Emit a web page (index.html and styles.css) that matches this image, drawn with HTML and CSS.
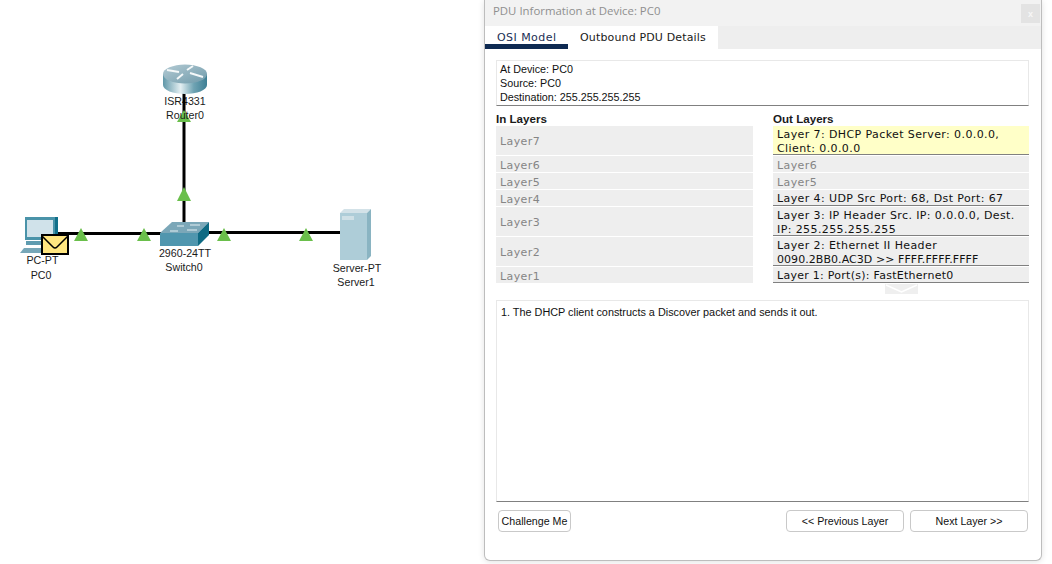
FILE: index.html
```html
<!DOCTYPE html>
<html lang="en">
<head>
    <meta charset="UTF-8">
    <meta name="viewport" content="width=device-width, initial-scale=1.0">
    <title>PDU Information at Device: PC0</title>
    <link rel="stylesheet" href="styles.css">
</head>
<body>
    <div class="workspace">
        <svg class="topology" width="484" height="564" viewBox="0 0 484 564">
            <defs>
                <linearGradient id="router-side" x1="0" x2="1" y1="0" y2="0">
                    <stop offset="0" stop-color="#5f97a8"/>
                    <stop offset="0.4" stop-color="#e4eff2"/>
                    <stop offset="0.7" stop-color="#6fa3b3"/>
                    <stop offset="1" stop-color="#3d7f94"/>
                </linearGradient>
                <linearGradient id="router-top" x1="0" x2="1" y1="0" y2="1">
                    <stop offset="0" stop-color="#b4cbd4"/>
                    <stop offset="1" stop-color="#6f9aaa"/>
                </linearGradient>
            </defs>

            <text class="node-label" x="185" y="105">ISR4331</text>

            <!-- links -->
            <path class="link" d="M184 90V232"/>
            <path class="link" d="M55 233.500H165"/>
            <path class="link" d="M205 232.500H342"/>

            <!-- router -->
            <path d="M163 74V85C163 90 173 94 185 94S207 90 207 85V74Z" fill="url(#router-side)"/>
            <ellipse cx="185" cy="74" rx="22" ry="9.500" fill="url(#router-top)"/>
            <path class="router-arrows" d="M167 70L179 72M190 73L203 77M193 66L187 70M183 74L177 79"/>

            <!-- switch -->
            <path d="M160 233L172 222H209L198 233Z" fill="#7ba7b8"/>
            <path d="M160 233H198V246H160Z" fill="#5096ae"/>
            <path d="M198 233L209 222V235L198 246Z" fill="#0e6a83"/>
            <path class="switch-arrows" d="M177 226H184M190 225H200M170 231H178M187 230H197"/>

            <!-- server -->
            <path d="M340 213L344 209H371L367 213Z" fill="#d3e2e8"/>
            <path d="M340 213H367V260H340Z" fill="#aecdd8"/>
            <path d="M367 213L371 209V256L367 260Z" fill="#8ab4c2"/>
            <path d="M342 216H354V220H342Z" fill="#cfe0e6"/>

            <!-- pc -->
            <path d="M25 217H55V240H25Z" fill="#4a93a9"/>
            <path d="M55 217H58V238L55 240Z" fill="#11708a"/>
            <path d="M27 220H53V237H27Z" fill="#d0e2ea"/>
            <path d="M26 241H50V245H26Z" fill="#5f9cb0"/>
            <path d="M24 248L20 253H44V248Z" fill="#77a7b8"/>

            <!-- packet -->
            <rect class="envelope" x="42" y="235" width="26" height="19"/>
            <path class="envelope-flap" d="M42 236L53 247Q55 249 57 247L68 236"/>

            <!-- link lights -->
            <g class="lights">
                <path d="M184 110L191 122H177Z"/>
                <path d="M184 187L191 201H177Z"/>
                <path d="M81 228L88 241H74Z"/>
                <path d="M144 228L151 241H137Z"/>
                <path d="M224 228L231 241H217Z"/>
                <path d="M306 228L313 241H299Z"/>
            </g>

            <text class="node-label" x="185" y="119">Router0</text>
            <text class="node-label" x="42.500" y="264">PC-PT</text>
            <text class="node-label" x="41" y="279">PC0</text>
            <text class="node-label" x="185" y="257">2960-24TT</text>
            <text class="node-label" x="184" y="271">Switch0</text>
            <text class="node-label" x="357" y="272">Server-PT</text>
            <text class="node-label" x="356" y="286">Server1</text>
        </svg>
    </div>

    <div class="panel">
        <div class="title-bar">
            <span class="title">PDU Information at Device: PC0</span>
            <button class="close-button">x</button>
        </div>
        <div class="tabs">
            <div class="tab active">OSI Model</div>
            <div class="tab">Outbound PDU Details</div>
        </div>
        <div class="panel-body">
            <div class="device-info">
                <div>At Device: PC0</div>
                <div>Source: PC0</div>
                <div>Destination: 255.255.255.255</div>
            </div>

            <div class="layers">
                <div class="layer-column">
                    <div class="column-title">In Layers</div>
                    <div class="layer tall off">Layer7</div>
                    <div class="layer off">Layer6</div>
                    <div class="layer off">Layer5</div>
                    <div class="layer off">Layer4</div>
                    <div class="layer tall off">Layer3</div>
                    <div class="layer tall off">Layer2</div>
                    <div class="layer off">Layer1</div>
                </div>
                <div class="layer-column">
                    <div class="column-title">Out Layers</div>
                    <div class="layer tall on selected">Layer 7: DHCP Packet Server: 0.0.0.0, Client: 0.0.0.0</div>
                    <div class="layer off">Layer6</div>
                    <div class="layer off">Layer5</div>
                    <div class="layer on">Layer 4: UDP Src Port: 68, Dst Port: 67</div>
                    <div class="layer tall on">Layer 3: IP Header Src. IP: 0.0.0.0, Dest. IP: 255.255.255.255</div>
                    <div class="layer tall on">Layer 2: Ethernet II Header<br><span class="mac">0090.2BB0.AC3D &gt;&gt; FFFF.FFFF.FFFF</span></div>
                    <div class="layer on port">Layer 1: Port(s): FastEthernet0</div>
                    <svg class="chevron" width="33" height="10" viewBox="0 0 33 10">
                        <path d="M0 0H33V10H0Z" fill="#efefef"/>
                        <path d="M1 1L16.500 8L32 1" fill="none" stroke="#ffffff" stroke-width="1.500"/>
                    </svg>
                </div>
            </div>

            <div class="description">1. The DHCP client constructs a Discover packet and sends it out.</div>

            <div class="actions">
                <button class="action challenge">Challenge Me</button>
                <div class="nav-buttons">
                    <button class="action nav">&lt;&lt; Previous Layer</button>
                    <button class="action nav">Next Layer &gt;&gt;</button>
                </div>
            </div>
        </div>
    </div>
</body>
</html>
```

FILE: styles.css
```css
html, body {
    height: 100%;
}
body {
    display: flex;
    margin: 0;
    overflow: hidden;
    background-color: #ffffff;
    font-family: "Liberation Sans", Arial, sans-serif;
    font-size: 10.67px;
    color: #111111;
}
.workspace {
    width: 484px;
    flex-shrink: 0;
}
.topology {
    display: block;
}
.node-label {
    font-family: "Liberation Sans", Arial, sans-serif;
    font-size: 10.67px;
    fill: #1a1a1a;
    text-anchor: middle;
}
.link {
    fill: none;
    stroke: #000000;
    stroke-width: 3;
}
.router-arrows {
    fill: none;
    stroke: #f4f8f9;
    stroke-width: 2;
}
.switch-arrows {
    fill: none;
    stroke: #e4eff3;
    stroke-width: 1;
}
.envelope {
    fill: #ffe680;
    stroke: #000000;
    stroke-width: 2;
}
.envelope-flap {
    fill: none;
    stroke: #000000;
    stroke-width: 1.500;
}
.lights {
    fill: #6abf4b;
}
.panel {
    display: flex;
    flex-direction: column;
    box-sizing: border-box;
    width: 558px;
    height: 561px;
    background-color: #ffffff;
    border: 1px solid #bdbdbd;
    border-top: none;
    border-radius: 0 0 6px 6px;
    box-shadow: 0 1px 6px rgba(0,0,0,0.12);
}
.title-bar {
    display: flex;
    justify-content: space-between;
    align-items: center;
    box-sizing: border-box;
    height: 26px;
    padding: 0 1px 0 8px;
    background-color: #f2f2f2;
}
.title {
    margin-bottom: 6px;
    font-family: "Open Sans", "Noto Sans", sans-serif;
    font-size: 11.400px;
    color: #8f8f8f;
}
.close-button {
    width: 19px;
    height: 19px;
    margin-top: 1px;
    padding: 0;
    border: none;
    background-color: #e3e3e3;
    color: #f7f7f7;
    font-size: 9px;
    font-weight: bold;
}
.tabs {
    display: flex;
    height: 23px;
    background-color: #eeeeee;
}
.tab {
    box-sizing: border-box;
    height: 23px;
    padding: 5px 12px 0;
    background-color: #ffffff;
    font-family: "DejaVu Sans", Verdana, sans-serif;
    font-size: 11px;
    letter-spacing: 0.150px;
    white-space: nowrap;
    color: #1a1a1a;
}
.tab.active {
    width: 83px;
    border-bottom: 5px solid #0e2a52;
    letter-spacing: 0.450px;
    color: #1b2f55;
}
.panel-body {
    display: flex;
    flex-direction: column;
    flex: 1;
    padding: 11px 12px 0 11px;
}
.device-info {
    box-sizing: border-box;
    height: 46px;
    padding: 1px 3px;
    line-height: 14px;
    font-size: 10.750px;
    border: 1px solid #e8e8e8;
    border-bottom: 1px solid #808080;
}
.layers {
    display: grid;
    grid-template-columns: 257px 256px;
    column-gap: 20px;
    margin-top: 6px;
    height: 182px;
}
.layer-column {
    display: flex;
    flex-direction: column;
    gap: 1px;
}
.column-title {
    height: 13px;
    line-height: 13px;
    font-weight: bold;
    font-size: 11.600px;
    color: #1a1a1a;
}
.layer {
    box-sizing: border-box;
    display: flex;
    align-items: center;
    flex-shrink: 0;
    height: 16px;
    padding: 4px 4px 0;
    background-color: #eeeeee;
    font-family: "DejaVu Sans", Verdana, sans-serif;
    font-size: 11px;
    letter-spacing: 0.400px;
    line-height: 13.500px;
}
.layer.tall {
    height: 29px;
    padding-top: 2px;
}
.layer.on {
    display: block;
    padding-top: 2px;
    color: #111111;
    border-bottom: 1px solid #808080;
}
.layer.off {
    color: #858585;
}
.layer.selected {
    background-color: #ffffc8;
}
.layer.port {
    letter-spacing: 0.270px;
}
.mac {
    letter-spacing: 0.060px;
}
.chevron {
    flex-shrink: 0;
    align-self: center;
    margin-left: 1px;
}
.description {
    box-sizing: border-box;
    height: 202px;
    margin-top: 6px;
    padding: 5px 4px;
    font-size: 10.850px;
    border: 1px solid #e8e8e8;
    border-bottom: 1px solid #808080;
}
.actions {
    display: flex;
    justify-content: space-between;
    margin-top: 8px;
    padding: 0 1px 0 2px;
}
.nav-buttons {
    display: flex;
    gap: 6px;
}
.action {
    box-sizing: border-box;
    height: 22px;
    padding: 0;
    background-color: #ffffff;
    border: 1px solid #c9c9c9;
    border-radius: 4px;
    font-family: "Liberation Sans", Arial, sans-serif;
    font-size: 10.670px;
    color: #111111;
}
.challenge {
    width: 73px;
}
.nav {
    width: 118px;
}
```
